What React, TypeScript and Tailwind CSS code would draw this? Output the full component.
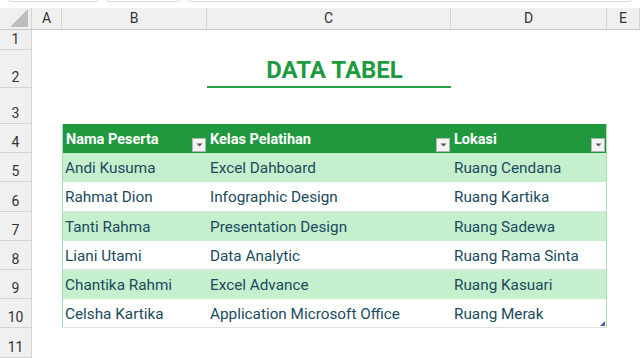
import React from 'react';

const cols = [
  { key: 'A', w: 'w-[30px]' },
  { key: 'B', w: 'w-[145px]' },
  { key: 'C', w: 'w-[244px]' },
  { key: 'D', w: 'w-[156px]' },
  { key: 'E', w: 'w-[33px]' },
];

const rows = [
  ['Andi Kusuma', 'Excel Dahboard', 'Ruang Cendana'],
  ['Rahmat Dion', 'Infographic Design', 'Ruang Kartika'],
  ['Tanti Rahma', 'Presentation Design', 'Ruang Sadewa'],
  ['Liani Utami', 'Data Analytic', 'Ruang Rama Sinta'],
  ['Chantika Rahmi', 'Excel Advance', 'Ruang Kasuari'],
  ['Celsha Kartika', 'Application Microsoft Office', 'Ruang Merak'],
];

const rowHeights = ['h-[29px]', 'h-[30px]', 'h-[29px]', 'h-[29px]', 'h-[29px]', 'h-[29px]'];

const FilterButton = () => (
  <div className="absolute right-[1px] bottom-[1px] w-[14px] h-[14px] bg-[#f4f4f4] border border-[#b4b4b4] flex items-center justify-center">
    <svg width="7" height="4" viewBox="0 0 7 4">
      <path d="M0.5 0.5 L6.5 0.5 L3.5 3.5 Z" fill="#555" />
    </svg>
  </div>
);

// row numbers sit near the bottom of their cell, like Excel
const RowHead = ({ n, h }: { n: number; h: string }) => (
  <div className={`w-[32px] ${h} shrink-0 bg-[#f0f0f0] border-r border-b border-[#d4d4d4] flex items-end justify-center pb-[2px] text-[14px] leading-[16px] text-[#333]`}>
    {n}
  </div>
);

export default function App() {
  return (
    <div
      className="w-[640px] h-[358px] bg-white overflow-hidden"
      style={{ fontFamily: 'Roboto, "Liberation Sans", sans-serif' }}
    >
      {/* formula bar remnants */}
      <div className="h-[8px] bg-white relative flex gap-[8px] px-[8px]">
        <div className="w-[90px] h-[3px] -mt-[1px] rounded-b-[4px] border border-[#d9d9d9]" />
        <div className="w-[74px] h-[3px] -mt-[1px] rounded-b-[4px] border border-[#d9d9d9]" />
        <div className="flex-1 h-[3px] -mt-[1px] rounded-b-[4px] border border-[#d9d9d9]" />
      </div>

      {/* column headers */}
      <div className="flex h-[22px] bg-[#f0f0f0] border-b border-[#c8c8c8]">
        <div className="w-[32px] shrink-0 border-r border-[#d4d4d4] relative">
          <svg className="absolute right-[3px] bottom-[2px]" width="18" height="18" viewBox="0 0 18 18">
            <path d="M18 0 L18 18 L0 18 Z" fill="#bdbdbd" />
          </svg>
        </div>
        {cols.map((c) => (
          <div
            key={c.key}
            className={`${c.w} shrink-0 border-r border-[#d4d4d4] flex items-center justify-center text-[14px] text-[#333]`}
          >
            {c.key}
          </div>
        ))}
      </div>

      {/* row 1 */}
      <div className="flex">
        <RowHead n={1} h="h-[20px]" />
      </div>

      {/* row 2: title */}
      <div className="flex">
        <RowHead n={2} h="h-[38px]" />
        <div className="w-[30px] shrink-0" />
        <div className="w-[545px] shrink-0 relative flex items-center justify-center pt-[1px]">
          <span className="font-bold text-[24px] text-[#1f9a40]">DATA TABEL</span>
          <div className="absolute left-[145px] w-[244px] bottom-0 h-[2px] bg-[#2aa148]" />
        </div>
      </div>

      {/* row 3 */}
      <div className="flex">
        <RowHead n={3} h="h-[36px]" />
      </div>

      {/* row 4: table header */}
      <div className="flex">
        <RowHead n={4} h="h-[29px]" />
        <div className="w-[30px] shrink-0" />
        <div className="flex bg-[#20993e] text-white font-bold text-[14.5px] border-l border-[#a6e0b2] w-[545px] shrink-0">
          <div className="w-[144px] shrink-0 relative flex items-center pl-[3px] pt-[3px]">
            Nama Peserta
            <FilterButton />
          </div>
          <div className="w-[244px] shrink-0 relative flex items-center pl-[3px] pt-[3px]">
            Kelas Pelatihan
            <FilterButton />
          </div>
          <div className="w-[156px] shrink-0 relative flex items-center pl-[3px] pt-[3px] border-r border-[#a6e0b2]">
            Lokasi
            <FilterButton />
          </div>
        </div>
      </div>

      {/* data rows */}
      {rows.map((r, i) => {
        const green = i % 2 === 0;
        const last = i === rows.length - 1;
        return (
          <div key={i} className="flex">
            <RowHead n={i + 5} h={rowHeights[i]} />
            <div className="w-[30px] shrink-0" />
            <div
              className={`flex relative w-[545px] shrink-0 text-[15.3px] text-[#194b5d] border-l border-r border-[#a6e0b2] pt-[2px] ${
                green ? 'bg-[#c6efce]' : 'bg-white border-b border-b-[#e0e0e0]'
              } ${last ? 'border-b border-b-[#d8d8d8]' : ''} ${rowHeights[i]}`}
            >
              <div className="w-[144px] shrink-0 flex items-center pl-[2px]">{r[0]}</div>
              <div className="w-[244px] shrink-0 flex items-center pl-[3px]">{r[1]}</div>
              <div className="w-[155px] shrink-0 flex items-center pl-[3px]">{r[2]}</div>
              {last && (
                <svg className="absolute right-[1px] bottom-[1px]" width="5" height="5" viewBox="0 0 5 5">
                  <path d="M5 0 L5 5 L0 5 Z" fill="#4a5bb8" />
                </svg>
              )}
            </div>
          </div>
        );
      })}

      {/* row 11 */}
      <div className="flex">
        <RowHead n={11} h="h-[30px]" />
      </div>
    </div>
  );
}
